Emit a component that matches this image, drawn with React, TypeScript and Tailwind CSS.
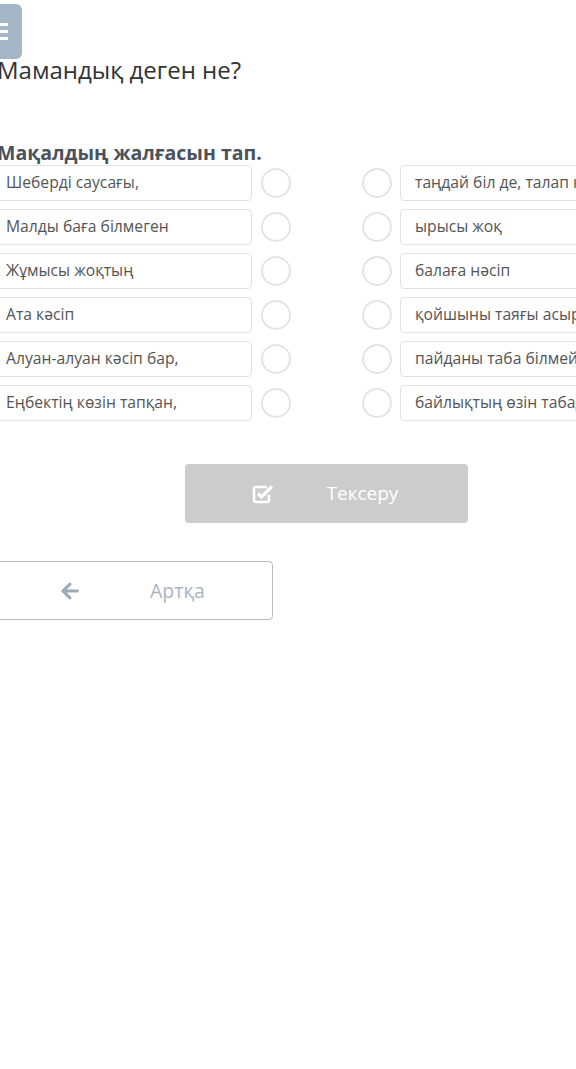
import { FaArrowLeft } from 'react-icons/fa';

const leftItems = [
  'Шеберді саусағы,',
  'Малды бағa білмеген',
  'Жұмысы жоқтың',
  'Ата кәсіп',
  'Алуан-алуан кәсіп бар,',
  'Еңбектің көзін тапқан,',
];

const rightItems = [
  'таңдай біл де, талап қыл',
  'ырысы жоқ',
  'балаға нәсіп',
  'қойшыны таяғы асырайды',
  'пайданы таба білмейді',
  'байлықтың өзін табады',
];

function CheckSquare() {
  return (
    <svg viewBox="0 0 22 20" className="ml-[67px] h-[20px] w-[22px]" fill="none" stroke="currentColor">
      <path d="M15 3H4a2 2 0 0 0-2 2v11a2 2 0 0 0 2 2h11a2 2 0 0 0 2-2v-5" strokeWidth="2.6" />
      <path d="M6 9.5l3.5 3.5L20 2.5" strokeWidth="3.2" strokeLinejoin="miter" />
    </svg>
  );
}

export default function App() {
  return (
    <div className="min-h-screen overflow-hidden bg-white font-['Open_Sans',sans-serif]">
      <div className="ml-[-10px] w-[672px] pt-1">
        <button className="ml-[-12px] flex h-[55px] w-[44px] items-center justify-center rounded-md bg-[#a5b6c6]">
          <span className="flex w-[16px] flex-col gap-[4px]">
            <span className="h-[3px] bg-white" />
            <span className="h-[3px] bg-white" />
            <span className="h-[3px] bg-white" />
          </span>
        </button>
        <h1 className="mt-[-3px] pl-[7px] text-[24px] leading-[28px] text-[#333]">Мамандық деген не?</h1>

        <h2 className="mt-[56px] pl-[7px] text-[19.5px] font-bold leading-[25px] text-[#4a525d]">
          Мақалдың жалғасын тап.
        </h2>

        <div className="flex flex-col gap-[8px]">
          {leftItems.map((left, i) => (
            <div key={i} className="flex items-center">
              <div className="flex h-[36px] w-[262px] items-center overflow-hidden whitespace-nowrap rounded border border-[#e2e2e2] px-[15px] text-[15.7px] text-[#555]">
                {left}
              </div>
              <span className="ml-[9px] h-[30px] w-[30px] rounded-full border-2 border-[#e4e4e4]" />
              <span className="ml-[71px] h-[30px] w-[30px] rounded-full border-2 border-[#e4e4e4]" />
              <div className="ml-[8px] flex h-[36px] w-[262px] items-center overflow-hidden whitespace-nowrap rounded border border-[#e2e2e2] px-[14px] text-[15.7px] text-[#555]">
                {rightItems[i]}
              </div>
            </div>
          ))}
        </div>

        <div className="mt-[43px] flex justify-center">
          <button className="flex h-[59px] w-[283px] items-center rounded bg-[#cccccc] text-[19px] text-white">
            <CheckSquare />
            <span className="ml-[53px]">Тексеру</span>
          </button>
        </div>

        <button className="mt-[38px] flex h-[59px] w-[283px] items-center rounded border border-[#bcbcbc] bg-white text-[19.5px] text-[#a9b4bf]">
          <FaArrowLeft className="ml-[69px] h-[20px] w-[20px] text-[#9aabb9]" />
          <span className="ml-[70px]">Артқа</span>
        </button>
      </div>
    </div>
  );
}
